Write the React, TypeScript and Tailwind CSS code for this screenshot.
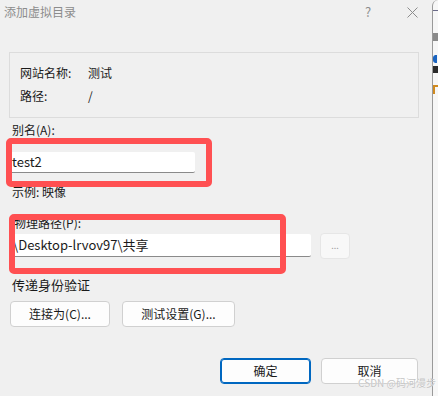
import React from 'react';

const font = { fontFamily: '"Noto Sans CJK SC", "Liberation Sans", sans-serif' };

const Btn: React.FC<{ label: string; w: string; primary?: boolean }> = ({ label, w, primary }) => (
    <div className={`${w} h-[26px] flex items-center justify-center rounded-[4px] bg-[#fdfdfd] text-[12px] text-[#1a1a1a] ${primary ? 'border border-[#0067c0] shadow-[inset_0_0_0_1px_#0067c0]' : 'border border-[#d0d0d0]'}`}>
        {label}
    </div>
);

export default function App() {
    return (
        <div className="relative w-[438px] h-[396px] flex bg-[#f0f0f0] overflow-hidden text-[12px] leading-[16px] text-[#1a1a1a]" style={font}>
            {/* dialog */}
            <div className="w-[432px] h-full flex flex-col">
                {/* title bar */}
                <div className="h-[30px] flex items-center pl-[4px] pb-[6px]">
                    <span className="text-[12px] text-[#8c8c8c]">添加虚拟目录</span>
                    <span className="ml-[289px] text-[13px] text-[#8c8c8c]">?</span>
                    <svg className="ml-[36px]" width="11" height="11" viewBox="0 0 11 11">
                        <path d="M0.5 0.5 L10.5 10.5 M10.5 0.5 L0.5 10.5" stroke="#8c8c8c" strokeWidth="1" fill="none" />
                    </svg>
                </div>

                {/* site info group */}
                <div className="mt-[22px] ml-[9px] w-[410px] h-[66px] border border-[#dcdcdc] pt-[12px] pl-[10px] flex flex-col gap-[7px]">
                    <div className="flex">
                        <span className="w-[68px]">网站名称:</span>
                        <span>测试</span>
                    </div>
                    <div className="flex">
                        <span className="w-[68px]">路径:</span>
                        <span>/</span>
                    </div>
                </div>

                <div className="mt-[4px] ml-[12px]">别名(A):</div>
                <div className="mt-[14px] ml-[8px] w-[187px] h-[21px] bg-white border-b border-[#8a8a8a] rounded-[2px] pl-[4px] flex items-center text-[13px]">
                    test2
                </div>
                <div className="mt-[11px] ml-[12px]">示例: 映像</div>

                <div className="mt-[15px] ml-[14px]">物理路径(P):</div>
                <div className="mt-[2px] h-[26px] flex items-start">
                    <div className="mt-[1px] ml-[10px] w-[301px] h-[23px] bg-white border-b border-[#8a8a8a] rounded-[2px] flex items-center overflow-hidden text-[13px] whitespace-nowrap">
                        <span className="-ml-[2px]">\\Desktop-lrvov97\共享</span>
                    </div>
                    <div className="ml-[9px] w-[30px] h-[26px] rounded-[4px] bg-[#f8f8f8] border border-[#e6e6e6] flex items-center justify-center text-[9px] text-[#a0a0a0]">
                        ...
                    </div>
                </div>

                <div className="mt-[18px] ml-[12px] text-[13px]">传递身份验证</div>
                <div className="mt-[8px] ml-[10px] flex gap-[12px]">
                    <Btn label="连接为(C)..." w="w-[100px]" />
                    <Btn label="测试设置(G)..." w="w-[113px]" />
                </div>

                <div className="mt-[31px] ml-[220px] flex gap-[10px]">
                    <Btn label="确定" w="w-[91px]" primary />
                    <Btn label="取消" w="w-[97px]" />
                </div>
            </div>

            {/* neighbouring window sliver */}
            <div className="relative flex-1 h-full border-l border-[#9a9a9a] bg-[#f7f7f7] rounded-tl-[6px]">
                <div className="mt-[10px] h-[1px] bg-[#6b6b8a]" />
                <div className="mt-[22px] w-[5px] h-[8px] bg-[#8a8a8a]" />
                <div className="mt-[14px] w-[4px] h-[8px] border-2 border-[#1a64c0] rounded-l-[3px]" />
                <div className="mt-[3px] w-[5px] h-[7px] bg-[#2a2a2a]" />
                <div className="mt-[12px] w-[5px] h-[9px] border-l-2 border-t-2 border-[#d08a20]" />
            </div>

            {/* red annotation boxes */}
            <div className="absolute left-[6px] top-[138px] w-[206px] h-[49px] border-[6px] border-[#ff5052] rounded-[5px]" />
            <div className="absolute left-[9px] top-[214px] w-[277px] h-[60px] border-[6px] border-[#ff5052] rounded-[5px]" />

            {/* watermark */}
            <div className="absolute right-[2px] top-[377px] text-[10px] leading-[12px] text-[#c4c4c4] [text-shadow:0_0_1px_#ffffff]">
                CSDN @码河漫步
            </div>
        </div>
    );
}
